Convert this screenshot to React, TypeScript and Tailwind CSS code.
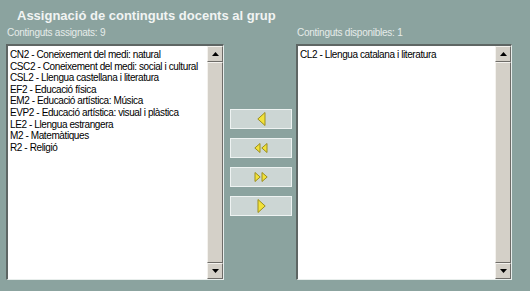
import React from 'react';

const ASSIGNED = [
  'CN2 - Coneixement del medi: natural',
  'CSC2 - Coneixement del medi: social i cultural',
  'CSL2 - Llengua castellana i literatura',
  'EF2 - Educació física',
  'EM2 - Educació artística: Música',
  'EVP2 - Educació artística: visual i plàstica',
  'LE2 - Llengua estrangera',
  'M2 - Matemàtiques',
  'R2 - Religió',
];

const AVAILABLE = ['CL2 - Llengua catalana i literatura'];

function ScrollArrow({ up }: { up?: boolean }) {
  return (
    <div className="h-[16px] w-full bg-[#d4d0c8] border-t border-l border-t-[#f4f2ee] border-l-[#f4f2ee] border-b border-r border-b-[#6e6c68] border-r-[#6e6c68] flex items-center justify-center">
      <svg width="7" height="4" viewBox="0 0 7 4">
        {up ? <polygon points="3.5,0 7,4 0,4" fill="#000" /> : <polygon points="0,0 7,0 3.5,4" fill="#000" />}
      </svg>
    </div>
  );
}

function ListBox({ items }: { items: string[] }) {
  return (
    <div className="flex h-[236px] bg-white border-t-2 border-l-2 border-t-[#5e6664] border-l-[#5e6664] border-b border-r border-b-[#e8eeec] border-r-[#e8eeec]">
      <ul className="flex-1 pl-[2px] pt-[3px] text-[10px] leading-[11.6px] text-black tracking-[-0.4px] font-['Liberation_Sans',Arial,sans-serif]">
        {items.map(item => (
          <li key={item} className="whitespace-nowrap">{item}</li>
        ))}
      </ul>
      <div className="w-[16px] flex flex-col">
        <ScrollArrow up />
        <div className="flex-1 bg-[#d4d0c8] border-b border-r border-b-[#6e6c68] border-r-[#6e6c68] border-t border-l border-t-[#f4f2ee] border-l-[#f4f2ee]"></div>
        <ScrollArrow />
      </div>
    </div>
  );
}

function MoveButton({ children }: { children: React.ReactNode }) {
  return (
    <button className="w-[62px] h-[20px] bg-[#ccd6d4] border border-[#eef3f2] flex items-center justify-center">
      {children}
    </button>
  );
}

const ARROW_FILL = '#f2e23a';
const ARROW_STROKE = '#9c8f1e';

export default function App() {
  return (
    <div className="w-[530px] h-[291px] bg-[#8ba39f] font-['Liberation_Sans',Arial,sans-serif] overflow-hidden">
      <h1 className="pl-[17px] pt-[8px] h-[20px] text-[13px] leading-[16px] font-bold tracking-[0px] text-[#f1f4f3]">
        Assignació de continguts docents al grup
      </h1>
      <div className="flex pl-[6px] pt-[7px]">
        <div className="w-[218px]">
          <div className="h-[17px] pl-[1px] text-[10px] leading-[12px] tracking-[-0.25px] text-[#e6ecea]">Continguts assignats: 9</div>
          <ListBox items={ASSIGNED} />
        </div>

        <div className="ml-[6px] mr-[4px] pt-[82px] flex flex-col gap-[9px]">
          <MoveButton>
            <svg width="9" height="14" viewBox="0 0 9 14">
              <polygon points="8,0.5 8,13.5 0.8,7" fill={ARROW_FILL} stroke={ARROW_STROKE} strokeWidth="1" />
            </svg>
          </MoveButton>
          <MoveButton>
            <svg width="14" height="10" viewBox="0 0 14 10">
              <polygon points="6,0.5 6,9.5 0.8,5" fill={ARROW_FILL} stroke={ARROW_STROKE} strokeWidth="1" />
              <polygon points="13,0.5 13,9.5 7.8,5" fill={ARROW_FILL} stroke={ARROW_STROKE} strokeWidth="1" />
            </svg>
          </MoveButton>
          <MoveButton>
            <svg width="14" height="10" viewBox="0 0 14 10">
              <polygon points="1,0.5 1,9.5 6.2,5" fill={ARROW_FILL} stroke={ARROW_STROKE} strokeWidth="1" />
              <polygon points="8,0.5 8,9.5 13.2,5" fill={ARROW_FILL} stroke={ARROW_STROKE} strokeWidth="1" />
            </svg>
          </MoveButton>
          <MoveButton>
            <svg width="9" height="14" viewBox="0 0 9 14">
              <polygon points="1,0.5 1,13.5 8.2,7" fill={ARROW_FILL} stroke={ARROW_STROKE} strokeWidth="1" />
            </svg>
          </MoveButton>
        </div>

        <div className="w-[216px]">
          <div className="h-[17px] pl-[1px] text-[10px] leading-[12px] tracking-[-0.25px] text-[#e6ecea]">Continguts disponibles: 1</div>
          <ListBox items={AVAILABLE} />
        </div>
      </div>
    </div>
  );
}
